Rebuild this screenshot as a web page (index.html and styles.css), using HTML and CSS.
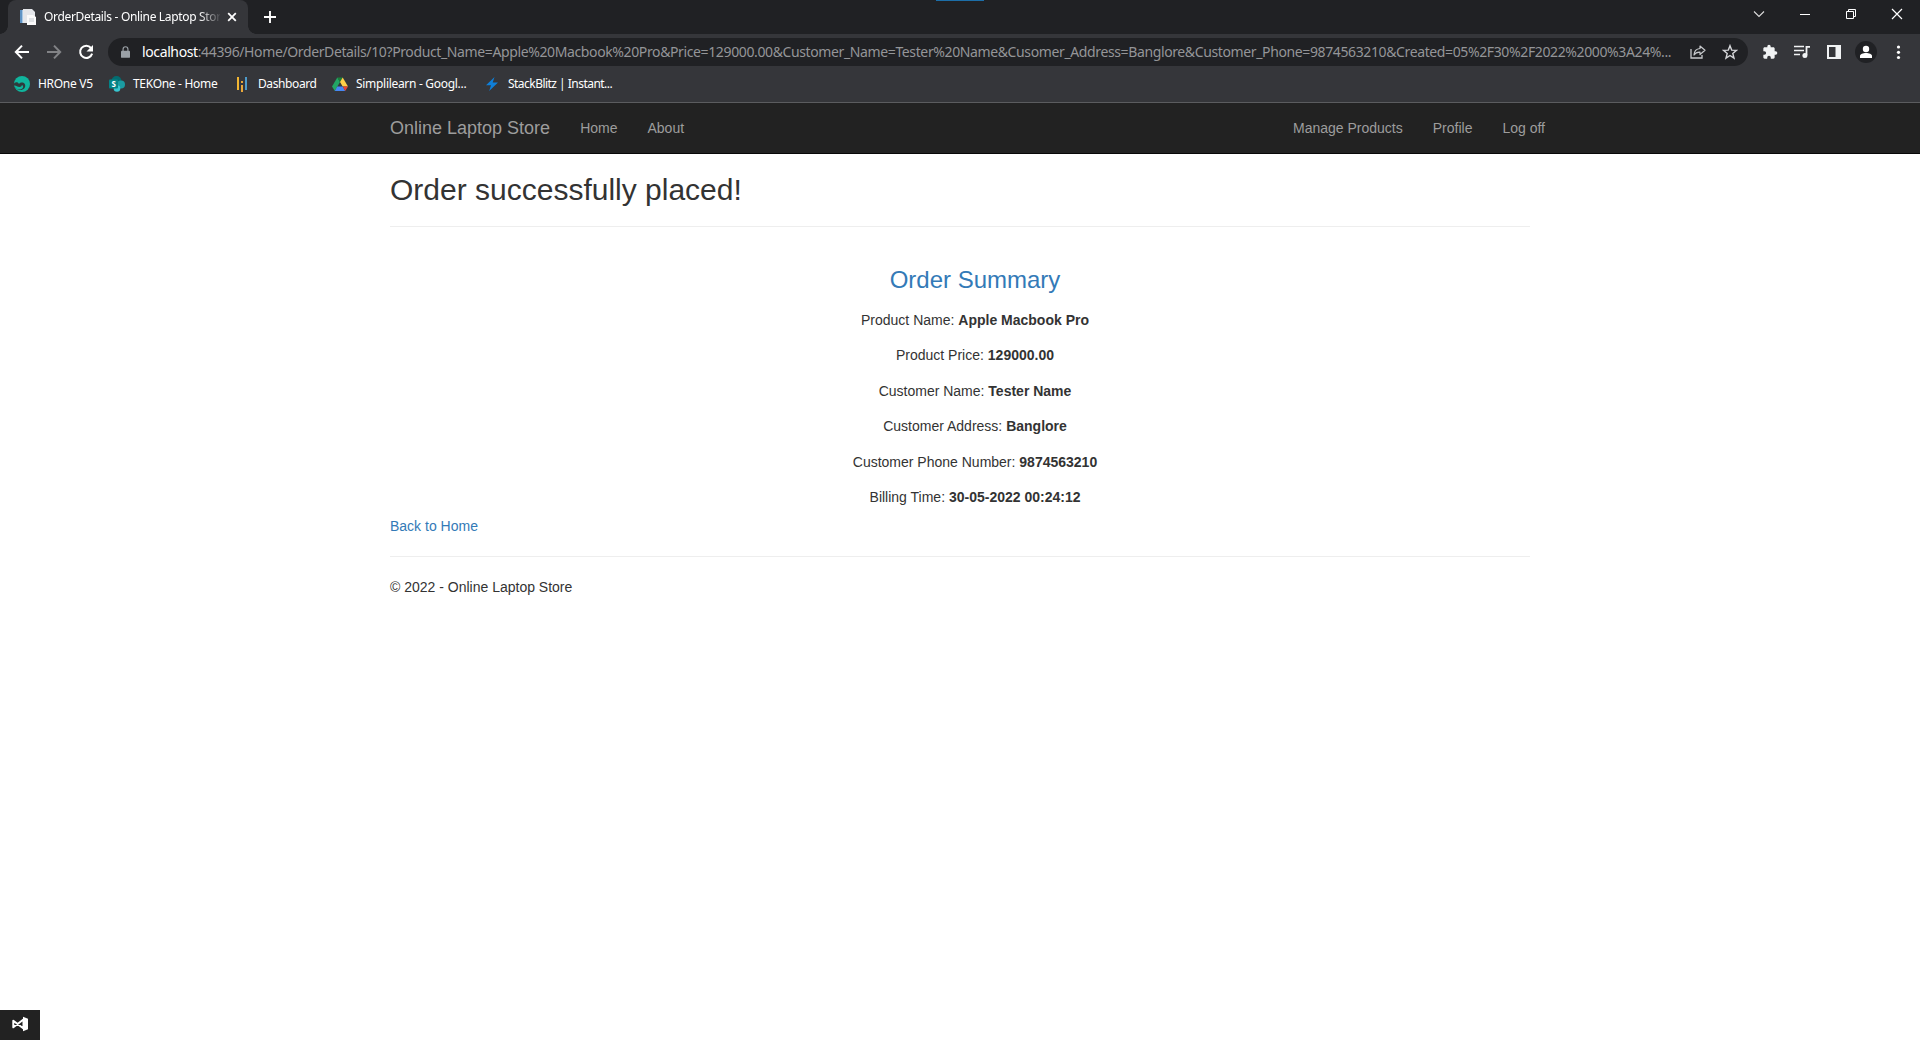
FILE: index.html
```html
<!DOCTYPE html>
<html lang="en">
<head>
<meta charset="utf-8">
<title>OrderDetails - Online Laptop Store</title>
<link rel="stylesheet" href="styles.css">
</head>
<body>
<header class="browser">
  <div class="tabstrip">
    <div class="tab">
      <svg class="favicon" width="16" height="16" viewBox="0 0 16 16"><path d="M0 1h9v13H0z" fill="#a9c8e4"/><path d="M0 1h2v13H0z" fill="#5f93c4"/><path d="M3 0h9l3 3v11H3z" fill="#e4e6ea"/><path d="M7 6h6l3 2v8H7z" fill="#fafafa"/><path d="M9 10h5M9 12h5" stroke="#c5cad0"/></svg>
      <span class="tab-title">OrderDetails - Online Laptop Stor</span>
      <svg class="tab-close" width="10" height="10" viewBox="0 0 10 10"><path d="M1.200 1.200l7.600 7.600M8.800 1.200L1.200 8.800" stroke="#fff" stroke-width="1.800"/></svg>
    </div>
    <svg class="new-tab" width="12" height="12" viewBox="0 0 12 12"><path d="M6 0v12M0 6h12" stroke="#fff" stroke-width="1.900"/></svg>
    <div class="window-controls">
      <svg width="12" height="12" viewBox="0 0 12 12"><path d="M1 3.500l5 5 5-5" fill="none" stroke="#ddd" stroke-width="1.100"/></svg>
      <svg width="12" height="12" viewBox="0 0 12 12"><path d="M1 6.500h10" stroke="#fff"/></svg>
      <svg width="12" height="12" viewBox="0 0 12 12"><path d="M1.500 3.500h7v7h-7zM3.500 3V1.500h7v7H9" fill="none" stroke="#fff"/></svg>
      <svg width="12" height="12" viewBox="0 0 12 12"><path d="M1 1l10 10M11 1L1 11" stroke="#fff" stroke-width="1.200"/></svg>
    </div>
    <i class="screen-marker"></i>
  </div>
  <div class="toolbar">
    <div class="nav-buttons">
      <svg width="16" height="16" viewBox="0 0 16 16"><path d="M15 8H2M8 1.600L1.800 8 8 14.400" fill="none" stroke="#fff" stroke-width="2"/></svg>
      <svg width="16" height="16" viewBox="0 0 16 16"><path d="M1 8h13M8 1.600L14.200 8 8 14.400" fill="none" stroke="#828386" stroke-width="2"/></svg>
      <svg width="16" height="16" viewBox="0 0 16 16"><path d="M13 4a6.100 6.100 0 1 0 1.100 5.600" fill="none" stroke="#fff" stroke-width="2"/><path d="M15 1v6.500H8.500z" fill="#fff"/></svg>
    </div>
    <div class="omnibox">
      <svg class="lock" width="9" height="12" viewBox="0 0 10 13"><path d="M1 5h8q1 0 1 1v6q0 1-1 1H1q-1 0-1-1V6q0-1 1-1z" fill="#9aa0a6"/><path d="M2.300 5.500V3.400a2.700 2.700 0 0 1 5.400 0v2.100" fill="none" stroke="#9aa0a6" stroke-width="1.300"/></svg>
      <span class="url"><span class="host">localhost</span>:44396/Home/OrderDetails/10?Product_Name=Apple%20Macbook%20Pro&amp;Price=129000.00&amp;Customer_Name=Tester%20Name&amp;Cusomer_Address=Banglore&amp;Customer_Phone=9874563210&amp;Created=05%2F30%2F2022%2000%3A24%...</span>
      <svg class="share" width="16" height="16" viewBox="0 0 16 16"><path d="M1 5v9h11v-3" fill="none" stroke="#c7c9cc" stroke-width="1.300"/><path d="M10 2l5 4.300-5 4.200V8.100C7 8 5.200 9 4 11c.2-4 2.500-6.200 6-6.500z" fill="none" stroke="#c7c9cc" stroke-width="1.200" stroke-linejoin="round"/></svg>
      <svg class="star" width="16" height="16" viewBox="0 0 16 16"><path d="M8 1.700l1.700 4.400 4.800.3-3.700 3 1.200 4.700L8 11.500l-4 2.600 1.200-4.700-3.700-3 4.800-.3z" fill="none" stroke="#d5d6d9" stroke-width="1.400"/></svg>
    </div>
    <div class="actions">
      <svg width="16" height="16" viewBox="0 0 24 24"><path d="M20.500 11H19V7c0-1.100-.9-2-2-2h-4V3.500a2.500 2.500 0 0 0-5 0V5H4c-1.100 0-2 .9-2 2v3.800h1.500a2.700 2.700 0 0 1 0 5.400H2V20c0 1.100.9 2 2 2h3.800v-1.500a2.700 2.700 0 0 1 5.400 0V22H17c1.100 0 2-.9 2-2v-4h1.500a2.500 2.500 0 0 0 0-5z" fill="#f1f3f4"/></svg>
      <svg width="16" height="16" viewBox="0 0 16 16"><path d="M0 2.500h10M0 6.500h10M0 10.500h6" stroke="#f1f3f4" stroke-width="1.500"/><path d="M12.500 11V2.800H16" fill="none" stroke="#f1f3f4" stroke-width="1.800"/><circle cx="10.900" cy="11.500" r="2.500" fill="#f1f3f4"/></svg>
      <svg width="16" height="16" viewBox="0 0 16 16"><path d="M1 1h14v14H1zM3 3v10h6.500V3z" fill="#f1f3f4" fill-rule="evenodd"/></svg>
      <svg width="22" height="22" viewBox="0 0 22 22"><circle cx="11" cy="11" r="11" fill="#202124"/><circle cx="11" cy="8" r="3.200" fill="#fff"/><path d="M5 17v-2c0-2 3-3 6-3s6 1 6 3v2z" fill="#fff"/></svg>
      <svg width="16" height="16" viewBox="0 0 16 16"><circle cx="8.500" cy="3" r="1.600" fill="#fff"/><circle cx="8.500" cy="8.300" r="1.600" fill="#fff"/><circle cx="8.500" cy="13.500" r="1.600" fill="#fff"/></svg>
    </div>
  </div>
  <nav class="bookmarks">
    <a class="bm bm-hr"><svg width="16" height="16" viewBox="0 0 16 16"><circle cx="8" cy="8" r="8" fill="#10b59d"/><path d="M0 7.500C2 5.500 4 6 5 8c1.500-2 5-2 6 .5 1 3-1.500 5.500-4.500 5.500C3 14 1.500 11.500 0 10z" fill="#303a3c"/><path d="M0 9.500c2-.5 3 1.500 5.500 1.500 1.500 0 2-1 2.500-2 2 1 1.500 4-2 4.500C3 13.800 1 12 0 9.500z" fill="#10b59d"/></svg><span>HROne V5</span></a>
    <a class="bm bm-tek"><svg width="16" height="16" viewBox="0 0 16 16"><circle cx="7.500" cy="5" r="5" fill="#036c70"/><circle cx="12" cy="8.500" r="4" fill="#1a9ba1"/><circle cx="8" cy="12.500" r="3.300" fill="#37c6d0"/><rect y="3.500" width="9" height="9" rx="1" fill="#038387"/><text x="4.500" y="10.800" text-anchor="middle" class="s-letter">S</text></svg><span>TEKOne - Home</span></a>
    <a class="bm bm-dash"><svg width="12" height="16" viewBox="0 0 12 16"><path d="M2 1v13" stroke="#f2b632" stroke-width="2"/><path d="M6 5v2M6 9v7" stroke="#e9a83a" stroke-width="2"/><path d="M10 1v13" stroke="#4d9ac9" stroke-width="2"/></svg><span>Dashboard</span></a>
    <a class="bm bm-drive"><svg width="16" height="16" viewBox="0 0 16 16"><path d="M5.300 1.500L8 6 2.800 15 0 10.500z" fill="#22a565"/><path d="M5.300 1.500h5.400L8 6z" fill="#188038"/><path d="M10.700 1.500L16 10.500h-5.300L8 6z" fill="#ffcf48"/><path d="M5.300 10.500h5.400L13.200 15H2.800z" fill="#4688f4"/><path d="M10.700 10.500H16L13.200 15z" fill="#ea4335"/></svg><span>Simplilearn - Googl...</span></a>
    <a class="bm bm-stack"><svg width="12" height="16" viewBox="0 0 12 16"><path d="M8.500 1L0 9.300h5L3.200 15 12 6.500H6.700z" fill="#0f7fd8"/></svg><span>StackBlitz | Instant...</span></a>
  </nav>
</header>
<nav class="navbar">
  <div class="container navbar-inner">
    <a class="brand">Online Laptop Store</a>
    <a class="nav-link">Home</a>
    <a class="nav-link">About</a>
    <div class="navbar-right"><a class="nav-link">Manage Products</a><a class="nav-link">Profile</a><a class="nav-link">Log off</a></div>
  </div>
</nav>
<main class="container">
  <h2>Order successfully placed!</h2>
  <hr>
  <section class="summary">
    <h3>Order Summary</h3>
    <p>Product Name: <b>Apple Macbook Pro</b></p>
    <p>Product Price: <b>129000.00</b></p>
    <p>Customer Name: <b>Tester Name</b></p>
    <p>Customer Address: <b>Banglore</b></p>
    <p>Customer Phone Number: <b>9874563210</b></p>
    <p>Billing Time: <b>30-05-2022 00:24:12</b></p>
  </section>
  <a class="back">Back to Home</a>
  <hr>
  <footer>© 2022 - Online Laptop Store</footer>
</main>
<div class="vs-badge"><svg width="16" height="16" viewBox="0 0 16 16"><path d="M1.300 4.700L11.500 12.500V3.500L1.300 11.300z" fill="none" stroke="#fff" stroke-width="2" stroke-linejoin="round"/><path d="M11 .8l5 2v10.400l-5 2z" fill="#fff"/></svg></div>
</body>
</html>
```
FILE: styles.css
```css
* { box-sizing: border-box; }
body {
  margin: 0;
  min-height: 1040px;
  background: #fff;
  color: #333;
  font: 14px/20px "Liberation Sans", Arial, sans-serif;
}
svg { display: block; flex: none; }

/* Browser frame */
.browser {
  height: 103px;
  background: #35363a;
  border-bottom: 1px solid #5b5c5f;
  font-family: "Noto Sans", sans-serif;
  color: #fff;
  white-space: nowrap;
}
.tabstrip {
  position: relative;
  display: flex;
  height: 34px;
  padding-left: 8px;
  background: #202124;
}
.tab {
  position: relative;
  display: flex;
  align-items: center;
  width: 240px;
  padding: 0 12px;
  background: #35363a;
  border-radius: 8px 8px 0 0;
}
.tab::before, .tab::after {
  content: "";
  position: absolute;
  bottom: 0;
  width: 8px;
  height: 8px;
}
.tab::before { left: -8px; background: radial-gradient(circle at 0 0, transparent 7.5px, #35363a 8px); }
.tab::after { right: -8px; background: radial-gradient(circle at 100% 0, transparent 7.5px, #35363a 8px); }
.tab-title {
  width: 176px;
  margin-left: 8px;
  font-size: 12px;
  letter-spacing: -0.33px;
  -webkit-mask-image: linear-gradient(90deg, #000 155px, transparent 178px);
  mask-image: linear-gradient(90deg, #000 155px, transparent 178px);
}
.tab-close { margin-left: 7px; }
.new-tab { margin: 11px 0 0 16px; }
.window-controls {
  display: flex;
  gap: 34px;
  margin: 8px 17px 0 auto;
}
.screen-marker {
  position: absolute;
  left: 936px;
  top: 0;
  width: 48px;
  height: 1px;
  background: #1c6ea8;
}
.toolbar {
  display: flex;
  align-items: center;
  height: 36px;
  padding: 0 14px;
}
.nav-buttons { display: flex; gap: 16px; width: 94px; }
.omnibox {
  display: flex;
  align-items: center;
  width: 1640px;
  height: 28px;
  padding-left: 13px;
  border-radius: 14px;
  background: #202124;
}
.url {
  width: 1536px;
  margin-left: 12px;
  color: #949598;
  font-size: 14px;
  letter-spacing: -0.379px;
}
.host { color: #fff; }
.share { margin-left: 12px; }
.star { margin-left: 16px; }
.actions {
  display: flex;
  align-items: center;
  gap: 16px;
  margin-left: 14px;
}
.actions svg:nth-child(4) { margin: 0 -3px; }
.bookmarks {
  display: flex;
  align-items: center;
  height: 28px;
  padding-left: 14px;
  font-size: 12px;
}
.bm { display: flex; align-items: center; gap: 8px; width: 95px; letter-spacing: -0.3px; }
.bm-tek { width: 127px; }
.bm-dash { width: 96px; gap: 10px; letter-spacing: -0.4px; }
.bm-drive { width: 154px; }
.bm-stack { width: 140px; gap: 10px; letter-spacing: -0.53px; }
.s-letter { font: bold 8px "Noto Sans", sans-serif; fill: #fff; }

/* Site navigation */
.container { width: 1140px; margin: 0 auto; }
.navbar { height: 51px; background: #222; border-bottom: 1px solid #080808; }
.navbar-inner { display: flex; align-items: center; height: 50px; color: #9d9d9d; }
.brand { margin-right: 15px; font-size: 18px; }
.nav-link { padding: 15px; }
.navbar-right { display: flex; margin: 0 -30px 0 auto; }

/* Order details */
h2, h3 { margin: 0; font-weight: 400; line-height: 1.1; }
h2 { padding-top: 19px; font-size: 30px; }
hr { margin: 20px 0; border: 0; border-top: 1px solid #eee; }
.summary { padding: 20px 0 0 30px; text-align: center; }
h3 { margin-bottom: 16.6px; color: #337ab7; font-size: 24px; }
p { margin: 0 0 15.4px; }
p:last-child { margin-bottom: 9px; }
.back { color: #337ab7; }

.vs-badge {
  position: fixed;
  left: 0;
  bottom: 0;
  display: flex;
  width: 40px;
  height: 30px;
  padding: 6px 12px;
  background: #222;
}
```
